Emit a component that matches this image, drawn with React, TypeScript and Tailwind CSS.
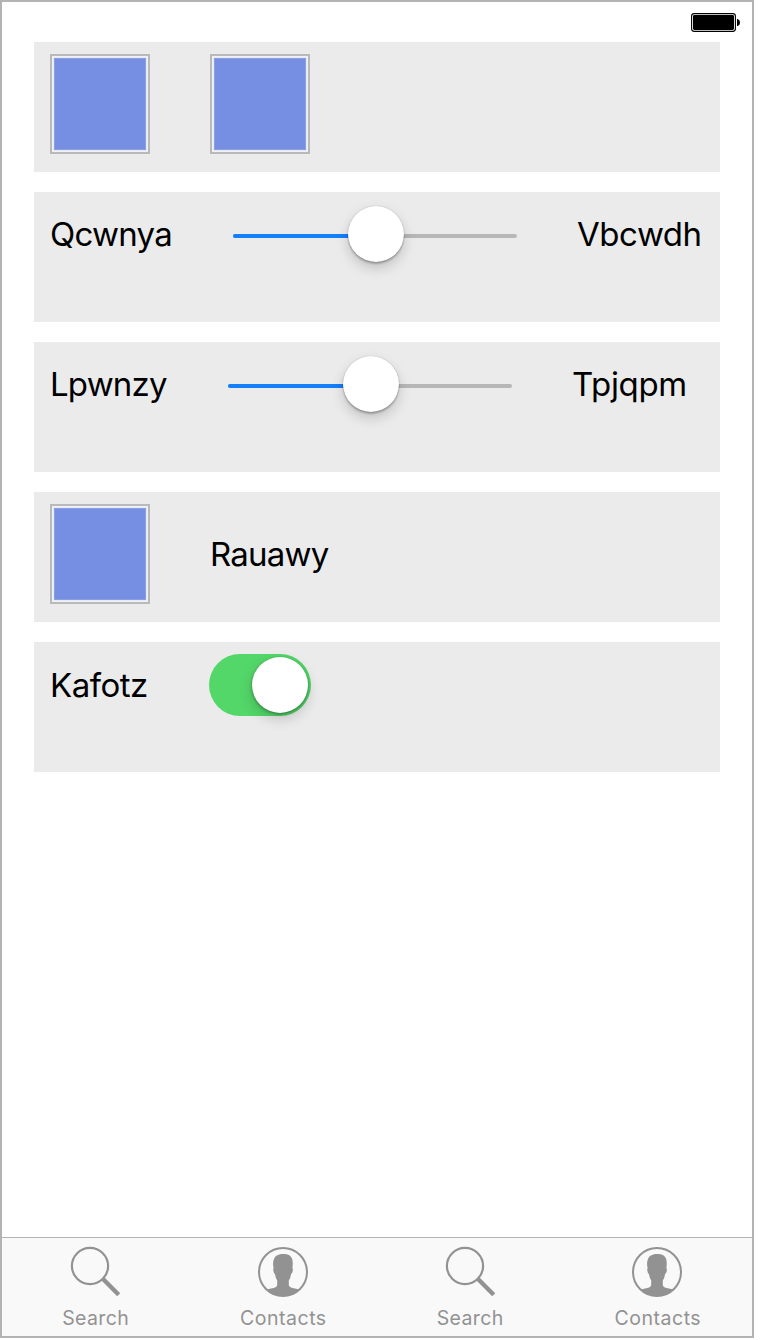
import type { ReactNode } from "react";

function Battery() {
  return (
    <svg width="50" height="20" viewBox="0 0 50 20" aria-label="Battery full">
      <rect x="0.6" y="0.6" width="43.8" height="17.8" rx="2.6" fill="#fff" stroke="#000" strokeWidth="1.1" />
      <rect x="2" y="2" width="41" height="15" rx="1.4" fill="#000" />
      <path d="M46 6h.6Q49 6.6 49 9.5T46.600 13H46z" fill="#000" />
    </svg>
  );
}

function Row({ children }: { children: ReactNode }) {
  return <section className="flex h-[130px] w-[686px] items-start bg-[#ebebeb] pl-4 pt-3">{children}</section>;
}

function Swatch() {
  return (
    <div className="size-[100px] shrink-0 border-2 border-[#b9b9b9] bg-[#f1f1f1] p-px">
      <div className="size-full border border-[#e6ebfb] bg-[#768fe2] shadow-[inset_0_0_0_1px_#8b9fe6]" />
    </div>
  );
}

function Slider() {
  return (
    <div className="mt-[30px] flex h-1 w-[284px] shrink-0 items-center rounded-full bg-[#b7b7b7]">
      <div className="h-1 w-[115px] rounded-l-full bg-[#147efb]" />
      <div className="-mt-1 size-14 shrink-0 rounded-full bg-white shadow-[0_0_1px_rgba(0,0,0,.3),0_2px_2px_rgba(0,0,0,.24),0_6px_13px_rgba(0,0,0,.18)]" />
    </div>
  );
}

function SearchIcon() {
  return (
    <svg className="-ml-px" width="52" height="52" viewBox="0 0 52 52" fill="none" stroke="#929292">
      <circle cx="21" cy="20" r="18.1" strokeWidth="2.2" />
      <path d="M33.500 32.500 49.700 48.700" strokeWidth="4.4" />
    </svg>
  );
}

function ContactIcon() {
  return (
    <svg width="52" height="52" viewBox="0 0 52 52" fill="#929292">
      <circle cx="26" cy="26" r="24" fill="none" stroke="#929292" strokeWidth="2" />
      <path d="M10 43.500Q12.500 42.600 16.500 42Q20 41.200 20.200 39V34.500Q18.600 32 17.900 28Q16.700 27.300 16.300 24.500Q16 22.700 16.700 22.300Q15.200 16.500 17.200 12.500C18.400 9.700 21.800 8 26 8C31 8 33.400 9.500 34.600 11.700Q36.400 14.500 35.400 22.300Q36.200 22.700 35.700 25.200Q35.300 27.400 34.100 28Q33.500 32 31.800 34.500V39Q32 41.200 35.500 42Q39.500 42.600 42 43.500A24 24 0 0 1 10 43.500Z" />
    </svg>
  );
}

function Tab({ kind }: { kind: "Search" | "Contacts" }) {
  return (
    <button className="flex flex-1 flex-col items-center pt-2">
      {kind === "Search" ? <SearchIcon /> : <ContactIcon />}
      <span className={`mt-[8px] text-[19.500px] leading-6 text-[#929292] ${kind === "Search" ? "tracking-[0.35px]" : "pl-px tracking-[0.5px]"}`}>{kind}</span>
    </button>
  );
}

export default function App() {
  return (
    <main className="flex h-[1338px] w-[754px] flex-col border-2 border-[#b3b3b3] bg-white font-['Inter',sans-serif] text-[33px] leading-10 text-black">
      <header className="flex h-10 shrink-0 justify-end pr-[11px] pt-[11px]">
        <Battery />
      </header>
      <div className="flex flex-1 flex-col gap-5 pl-8">
        <Row>
          <Swatch />
          <div className="w-[60px]" />
          <Swatch />
        </Row>
        <Row>
          <span className="mt-[10px] w-[183px] tracking-[-0.75px]">Qcwnya</span>
          <Slider />
          <span className="ml-[60px] mt-[10px] tracking-[-0.45px]">Vbcwdh</span>
        </Row>
        <Row>
          <span className="mt-[10px] w-[178px] tracking-[-0.8px]">Lpwnzy</span>
          <Slider />
          <span className="ml-[60px] mt-[10px] tracking-[-0.35px]">Tpjqpm</span>
        </Row>
        <Row>
          <Swatch />
          <span className="ml-[60px] mt-[30px] tracking-[-0.8px]">Rauawy</span>
        </Row>
        <Row>
          <span className="mt-[11px] w-[159px] tracking-[-0.5px]">Kafotz</span>
          <div className="flex h-[62px] w-[102px] items-center justify-end rounded-full bg-[#53d769] pr-[3px]">
            <div className="size-14 rounded-full bg-white shadow-[0_1px_3px_rgba(0,0,0,.38),0_6px_14px_rgba(0,0,0,.18)]" />
          </div>
        </Row>
      </div>
      <nav className="flex h-[99px] shrink-0 border-t border-[#b2b2b2] bg-[#f9f9f9] pr-px">
        <Tab kind="Search" />
        <Tab kind="Contacts" />
        <Tab kind="Search" />
        <Tab kind="Contacts" />
      </nav>
    </main>
  );
}
